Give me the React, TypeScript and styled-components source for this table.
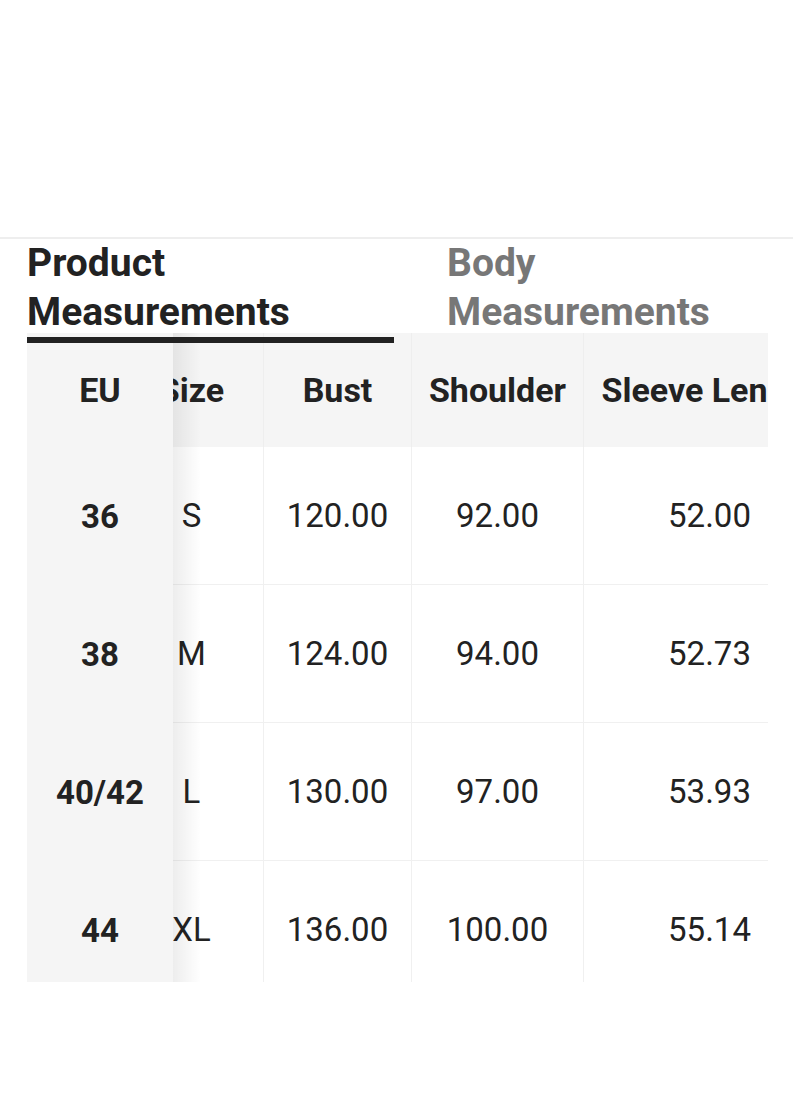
import React from "react";
import styled, { createGlobalStyle } from "styled-components";

const GlobalStyle = createGlobalStyle`
  html, body {
    margin: 0;
    padding: 0;
    background: #ffffff;
  }
  body {
    font-family: Roboto, "Liberation Sans", Arial, sans-serif;
    color: #222222;
  }
`;

const Page = styled.div`
  width: 800px;
  height: 1096px;
  padding-top: 237px;
  box-sizing: border-box;
  overflow: hidden;
`;

const Divider = styled.div`
  width: 793px;
  height: 2px;
  background: #eeeeee;
`;

const Tabs = styled.div`
  display: flex;
  padding-left: 27px;
  position: relative;
  z-index: 2;
`;

const Tab = styled.div<{ $active?: boolean }>`
  width: 367px;
  flex-shrink: 0;
  box-sizing: border-box;
  font-size: 39px;
  font-weight: 700;
  line-height: 49px;
  white-space: nowrap;
  color: ${(p) => (p.$active ? "#222222" : "#777777")};
  border-bottom: 6px solid ${(p) => (p.$active ? "#222222" : "transparent")};
  & + & {
    margin-left: 53px;
  }
`;

const Table = styled.div`
  display: flex;
  margin-top: -10px;
  margin-left: 27px;
  width: 741px;
  height: 649px;
  overflow: hidden;
  position: relative;
  z-index: 1;
`;

const StickyCol = styled.div`
  width: 146px;
  flex-shrink: 0;
  background: #f5f5f5;
  position: relative;
  z-index: 1;
  &::after {
    content: "";
    position: absolute;
    top: 0;
    bottom: 0;
    right: -28px;
    width: 28px;
    background: linear-gradient(to right, rgba(0, 0, 0, 0.07), rgba(0, 0, 0, 0));
  }
`;

const StickyCell = styled.div<{ $head?: boolean }>`
  height: ${(p) => (p.$head ? "114px" : "138px")};
  display: flex;
  align-items: center;
  justify-content: center;
  font-weight: 700;
  font-size: ${(p) => (p.$head ? "34px" : "33px")};
  color: #222222;
`;

const ScrollArea = styled.div`
  flex: 1;
  overflow: hidden;
`;

const Grid = styled.div`
  display: grid;
  grid-template-columns: 144px 148px 172px 252px;
  margin-left: -53px;
  width: 716px;
`;

const HeadCell = styled.div`
  height: 114px;
  box-sizing: border-box;
  background: #f5f5f5;
  border-right: 1px solid #eeeeee;
  display: flex;
  align-items: center;
  justify-content: center;
  font-size: 34px;
  font-weight: 700;
  white-space: nowrap;
  color: #222222;
`;

const Cell = styled.div`
  height: 138px;
  box-sizing: border-box;
  border-right: 1px solid #f0f0f0;
  border-bottom: 1px solid #f0f0f0;
  display: flex;
  align-items: center;
  justify-content: center;
  font-size: 33px;
  font-weight: 400;
  color: #222222;
  white-space: nowrap;
`;

const headers = ["Size", "Bust", "Shoulder", "Sleeve Length"];

const rows = [
  { eu: "36", cells: ["S", "120.00", "92.00", "52.00"] },
  { eu: "38", cells: ["M", "124.00", "94.00", "52.73"] },
  { eu: "40/42", cells: ["L", "130.00", "97.00", "53.93"] },
  { eu: "44", cells: ["XL", "136.00", "100.00", "55.14"] },
];

export default function App() {
  return (
    <>
      <GlobalStyle />
      <Page>
        <Divider />
        <Tabs>
          <Tab $active>
            Product
            <br />
            Measurements
          </Tab>
          <Tab>
            Body
            <br />
            Measurements
          </Tab>
        </Tabs>
        <Table>
          <StickyCol>
            <StickyCell $head>EU</StickyCell>
            {rows.map((r) => (
              <StickyCell key={r.eu}>{r.eu}</StickyCell>
            ))}
          </StickyCol>
          <ScrollArea>
            <Grid>
              {headers.map((h) => (
                <HeadCell key={h}>{h}</HeadCell>
              ))}
              {rows.map((r) =>
                r.cells.map((c, i) => <Cell key={r.eu + i}>{c}</Cell>)
              )}
            </Grid>
          </ScrollArea>
        </Table>
      </Page>
    </>
  );
}
